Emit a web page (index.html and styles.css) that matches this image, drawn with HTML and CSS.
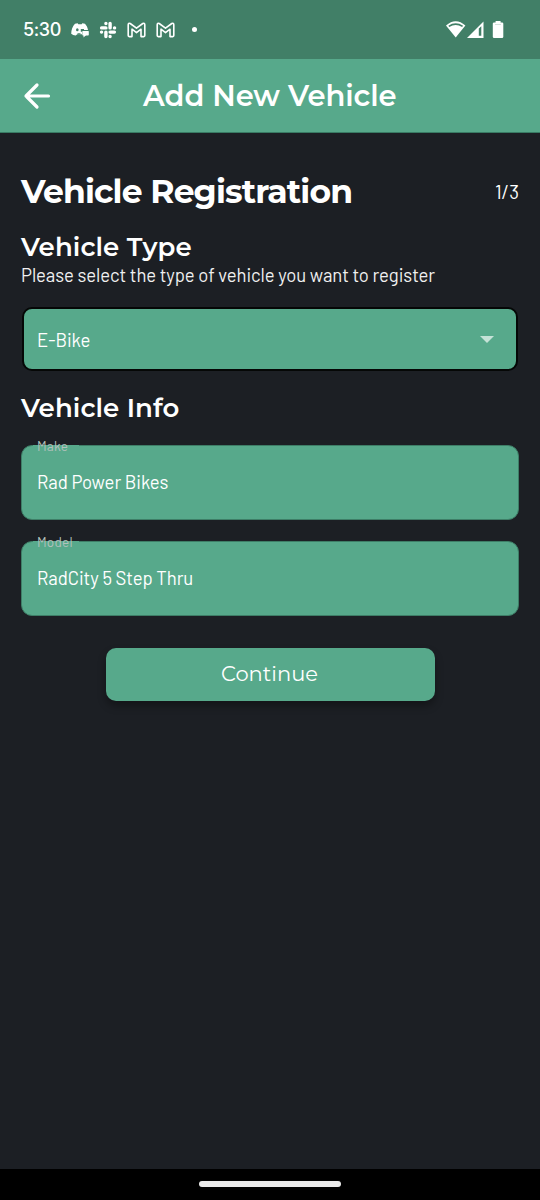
FILE: index.html
```html
<!DOCTYPE html>
<html lang="en">
<head>
<meta charset="utf-8">
<title>Add New Vehicle</title>
<link rel="stylesheet" href="styles.css">
</head>
<body>
<div class="screen">
  <header class="status">
    <span class="clock">5:30</span>
    <svg class="ico discord" width="18" height="16" viewBox="0 0 18 16"><path fill="#fff" d="M4 1.800 6.700 1.200l.6 1h3.400L11.300 1.200l2.700.6C15.600 3.600 16.600 5.500 17 8H11V12.200H6.200L4.800 13.600C2.800 13.300 1.200 12.700.2 11.800.2 8 1.600 4.300 4 1.800Z"/><rect x="11.300" y="8.900" width="6.500" height="4.500" rx=".7" fill="#fff"/><path fill="#fff" d="M12.500 12.800h3l-3 2.600z"/><ellipse cx="6.300" cy="7.700" rx="1.300" ry="1.500" fill="#417f67"/><path d="M10.400 9.800V7.700H13M6.500 11.800H9.500" stroke="#417f67" stroke-width="1.200" fill="none"/></svg>
    <svg class="ico slack" width="18" height="18" viewBox="0 0 18 18" stroke="#fff" stroke-width="3.400" stroke-linecap="round"><path d="M6.900 6.900H2.600M11.100 6.900V2.500M11.100 11.100h4.300M6.900 11.100v4.400M6.900 2.400v.1M15.500 6.900h.1M11.100 15.500v.1M2.500 11.100h.1"/></svg>
    <svg class="ico gmail" width="19" height="16" viewBox="0 0 19 16" fill="none" stroke="#fff" stroke-width="1.600" stroke-linejoin="round"><path d="M1.200 2.800Q1.300.8 3.200 1.500L9.500 6.200 15.800 1.500Q17.700.8 17.800 2.800V13.600Q17.800 14.600 16.800 14.600H14V7.200L9.500 10.600 5 7.200V14.600H2.200Q1.200 14.600 1.200 13.600Z"/></svg>
    <svg class="ico gmail" width="19" height="16" viewBox="0 0 19 16" fill="none" stroke="#fff" stroke-width="1.600" stroke-linejoin="round"><path d="M1.200 2.800Q1.300.8 3.200 1.500L9.500 6.200 15.800 1.500Q17.700.8 17.800 2.800V13.600Q17.800 14.600 16.800 14.600H14V7.200L9.500 10.600 5 7.200V14.600H2.200Q1.200 14.600 1.200 13.600Z"/></svg>
    <span class="dot"></span>
    <svg class="system" width="60" height="20" viewBox="0 0 60 20"><path fill="#fff" d="M0 5.500Q9.700-3 19.400 5.500L9.700 17.500Z"/><path d="M2.800 6.400q6.900-4.500 13.800 0" stroke="#417f67" stroke-width="1.700" fill="none"/><path fill="#fff" d="M37.500 1.500V18H21Z"/><path fill="#417f67" d="M32.800 8.500 35.300 6.300V15.800H32.800Z"/><rect x="46.800" y="2.500" width="10.500" height="15.500" rx="1.300" fill="#fff"/><rect x="49.600" y="1" width="5" height="3" fill="#fff"/><path d="M49 4.500h6" stroke="#c3d6ce" stroke-width=".7"/></svg>
  </header>
  <nav class="appbar">
    <svg class="back" width="30" height="28" viewBox="0 0 30 28" fill="none" stroke="#fff" stroke-width="3.200" stroke-linecap="round" stroke-linejoin="round"><path d="M15 3 4 14l11 11M4 14h22.500"/></svg>
    <h1 class="title">Add New Vehicle</h1>
  </nav>
  <main class="content">
    <div class="heading">
      <h2 class="page-title">Vehicle Registration</h2>
      <span class="step">1/3</span>
    </div>
    <h3 class="section type">Vehicle Type</h3>
    <p class="hint">Please select the type of vehicle you want to register</p>
    <div class="select"><span class="value">E-Bike</span><span class="caret"></span></div>
    <h3 class="section info">Vehicle Info</h3>
    <div class="field"><span class="label">Make</span><span class="value">Rad Power Bikes</span></div>
    <div class="field"><span class="label">Model</span><span class="value">RadCity 5 Step Thru</span></div>
    <button class="continue">Continue</button>
  </main>
  <footer class="navbar"><span class="pill"></span></footer>
</div>
</body>
</html>
```

FILE: styles.css
```css
* { box-sizing: border-box; }
body { margin: 0; background: #1c1f24; color: #fff; font-family: Barlow, Roboto, sans-serif; }
h1, h2, h3, p { margin: 0; white-space: nowrap; }
svg { display: block; flex: none; }
.screen { width: 540px; height: 1200px; display: flex; flex-direction: column; }
.status { height: 59px; background: #417f67; display: flex; align-items: center; padding-left: 23px; flex: none; }
.clock { width: 47px; font: 500 18px/24px Inter, sans-serif; letter-spacing: -0.4px; padding-top: 1px; }
.discord { margin-left: 1px; }
.slack { margin-left: 10px; }
.gmail { margin-left: 10px; }
.dot { width: 5px; height: 5px; border-radius: 50%; background: #fff; margin-left: 17px; }
.system { margin: 0 34px 0 auto; }
.appbar { height: 74px; flex: none; background: #57a98b; display: flex; align-items: center; padding-left: 22px; border-bottom: 1px solid #397b64; }
.title { margin: 1px 0 0 91px; font: 600 29px/40px Montserrat, Inter, sans-serif; letter-spacing: -0.05px; }
.content { flex: 1; padding: 36px 21px 0; display: flex; flex-direction: column; }
.heading { display: flex; justify-content: space-between; align-items: center; height: 44px; }
.page-title { font: 700 33px/44px Montserrat, Inter, sans-serif; letter-spacing: -0.83px; }
.step { font-size: 19px; }
.section { font: 600 26px/32px Montserrat, Inter, sans-serif; letter-spacing: 0.1px; }
.type { margin-top: 18px; }
.hint { font-size: 18.500px; line-height: 24px; letter-spacing: -0.07px; color: #f0f0f0; }
.select { height: 64px; margin: 20px 1px 0; border: 2px solid #050706; border-radius: 10px; background: #57a98b; display: flex; align-items: center; justify-content: space-between; padding: 0 22px 0 13px; }
.caret { border: 7px solid transparent; border-top-color: #c5e2d7; border-bottom: 0; }
.value { font-size: 18.500px; letter-spacing: -0.05px; white-space: nowrap; }
.info { margin: 21px 0 21px; }
.field { height: 75px; border: 1px solid #3e7e67; border-radius: 11px; background: #57a98b; display: flex; align-items: center; padding-left: 15px; position: relative; margin-bottom: 21px; }
.field .value { padding-bottom: 2px; }
.label { position: absolute; top: -8px; left: 15px; font-size: 13.500px; line-height: 16px; letter-spacing: 0.2px; color: #b3c1bc; }
/* Keeps the outline open behind the floating label */
.field::before { content: ""; position: absolute; top: -1px; left: 11px; width: 46px; height: 1px; background: #57a98b; }
.continue { width: 329px; height: 53px; margin: 11px auto 0; padding: 0 1px 2px 0; border: 0; border-radius: 10px; background: #57a98b; color: #fff; font: 400 21px/50px Montserrat, Inter, sans-serif; box-shadow: 0 5px 9px #0005; }
.navbar { height: 31px; padding-bottom: 1px; background: #000; display: flex; align-items: center; justify-content: center; flex: none; }
.pill { width: 142px; height: 6px; border-radius: 3px; background: #e9e9e9; }
```
